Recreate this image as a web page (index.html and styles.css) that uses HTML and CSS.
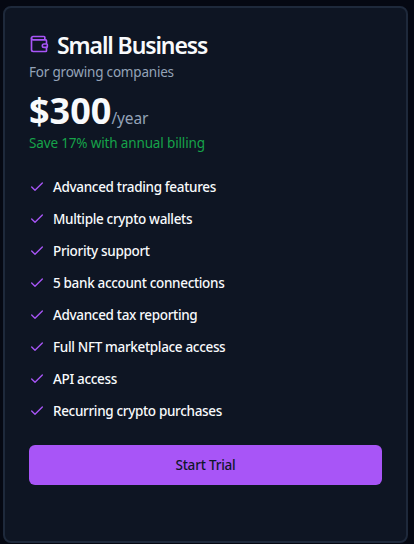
FILE: index.html
```
<!DOCTYPE html>
<html lang="en">
<head>
    <meta charset="UTF-8">
    <meta name="viewport" content="width=device-width, initial-scale=1.0">
    <title>Small Business Plan</title>
    <link rel="stylesheet" href="styles.css">
</head>
<body>
    <div class="card">
        <div class="card-header">
            <h3 class="plan-name">
                <svg class="wallet" viewBox="0 0 24 24">
                    <path d="M19 7V4a1 1 0 0 0-1-1H5a2 2 0 0 0 0 4h15a1 1 0 0 1 1 1v4h-3a2 2 0 0 0 0 4h3a1 1 0 0 0 1-1v-2a1 1 0 0 0-1-1"/>
                    <path d="M3 5v14a2 2 0 0 0 2 2h15a1 1 0 0 0 1-1v-4"/>
                </svg>
                <span>Small Business</span>
            </h3>
            <p class="description">For growing companies</p>
            <div class="price"><span class="amount">$300</span><span class="period">/year</span></div>
            <p class="savings">Save 17% with annual billing</p>
        </div>

        <ul class="features">
            <li><svg class="check" viewBox="0 0 24 24"><path d="M20 6 9 17l-5-5"/></svg><span>Advanced trading features</span></li>
            <li><svg class="check" viewBox="0 0 24 24"><path d="M20 6 9 17l-5-5"/></svg><span>Multiple crypto wallets</span></li>
            <li><svg class="check" viewBox="0 0 24 24"><path d="M20 6 9 17l-5-5"/></svg><span>Priority support</span></li>
            <li><svg class="check" viewBox="0 0 24 24"><path d="M20 6 9 17l-5-5"/></svg><span>5 bank account connections</span></li>
            <li><svg class="check" viewBox="0 0 24 24"><path d="M20 6 9 17l-5-5"/></svg><span>Advanced tax reporting</span></li>
            <li><svg class="check" viewBox="0 0 24 24"><path d="M20 6 9 17l-5-5"/></svg><span>Full NFT marketplace access</span></li>
            <li><svg class="check" viewBox="0 0 24 24"><path d="M20 6 9 17l-5-5"/></svg><span>API access</span></li>
            <li><svg class="check" viewBox="0 0 24 24"><path d="M20 6 9 17l-5-5"/></svg><span>Recurring crypto purchases</span></li>
        </ul>

        <button class="trial-btn">Start Trial</button>
    </div>
</body>
</html>
```
FILE: styles.css
```
* {
    box-sizing: border-box;
    margin: 0;
    padding: 0;
}

body {
    height: 544px;
    padding: 6px 6px 1px 3px;
    overflow: hidden;
    background-color: #050812;
    font-family: "Noto Sans", "Open Sans", sans-serif;
    font-size: 13.5px;
    line-height: 20px;
    white-space: nowrap;
}

.card {
    height: 537px;
    padding: 24px;
    border: 2px solid #1e293b;
    border-radius: 8px;
    background-color: #0e1523;
    color: #f8fafc;
}

svg {
    flex-shrink: 0;
    fill: none;
    stroke: #a855f7;
    stroke-width: 2;
    stroke-linecap: round;
    stroke-linejoin: round;
}

.plan-name {
    display: flex;
    align-items: center;
    gap: 8px;
    height: 24px;
    font-size: 23px;
    font-weight: 600;
    line-height: 24px;
    letter-spacing: -1.1px;
}

.plan-name span {
    padding-top: 2px;
}

.wallet {
    width: 20px;
    height: 20px;
}

.description {
    margin-top: 6px;
    color: #94a3b8;
    letter-spacing: -0.2px;
}

.price {
    margin-top: 8px;
    height: 40px;
    line-height: 42px;
}

.amount {
    font-size: 36px;
    font-weight: 700;
}

.period {
    color: #94a3b8;
    font-size: 15.5px;
    letter-spacing: -0.1px;
}

.savings {
    margin-top: 3px;
    color: #16a34a;
    letter-spacing: -0.15px;
}

.features {
    display: flex;
    flex-direction: column;
    gap: 12px;
    margin-top: 24px;
    list-style: none;
}

.features li {
    display: flex;
    align-items: center;
    gap: 8px;
    height: 20px;
    font-weight: 500;
    letter-spacing: -0.33px;
}

.check {
    width: 16px;
    height: 16px;
}

.trial-btn {
    display: block;
    width: 353px;
    height: 40px;
    margin-top: 24px;
    border: none;
    border-radius: 6px;
    background-color: #a855f7;
    color: #0f172a;
    font: 500 13.5px/20px "Noto Sans", "Open Sans", sans-serif;
    letter-spacing: -0.2px;
}
```
